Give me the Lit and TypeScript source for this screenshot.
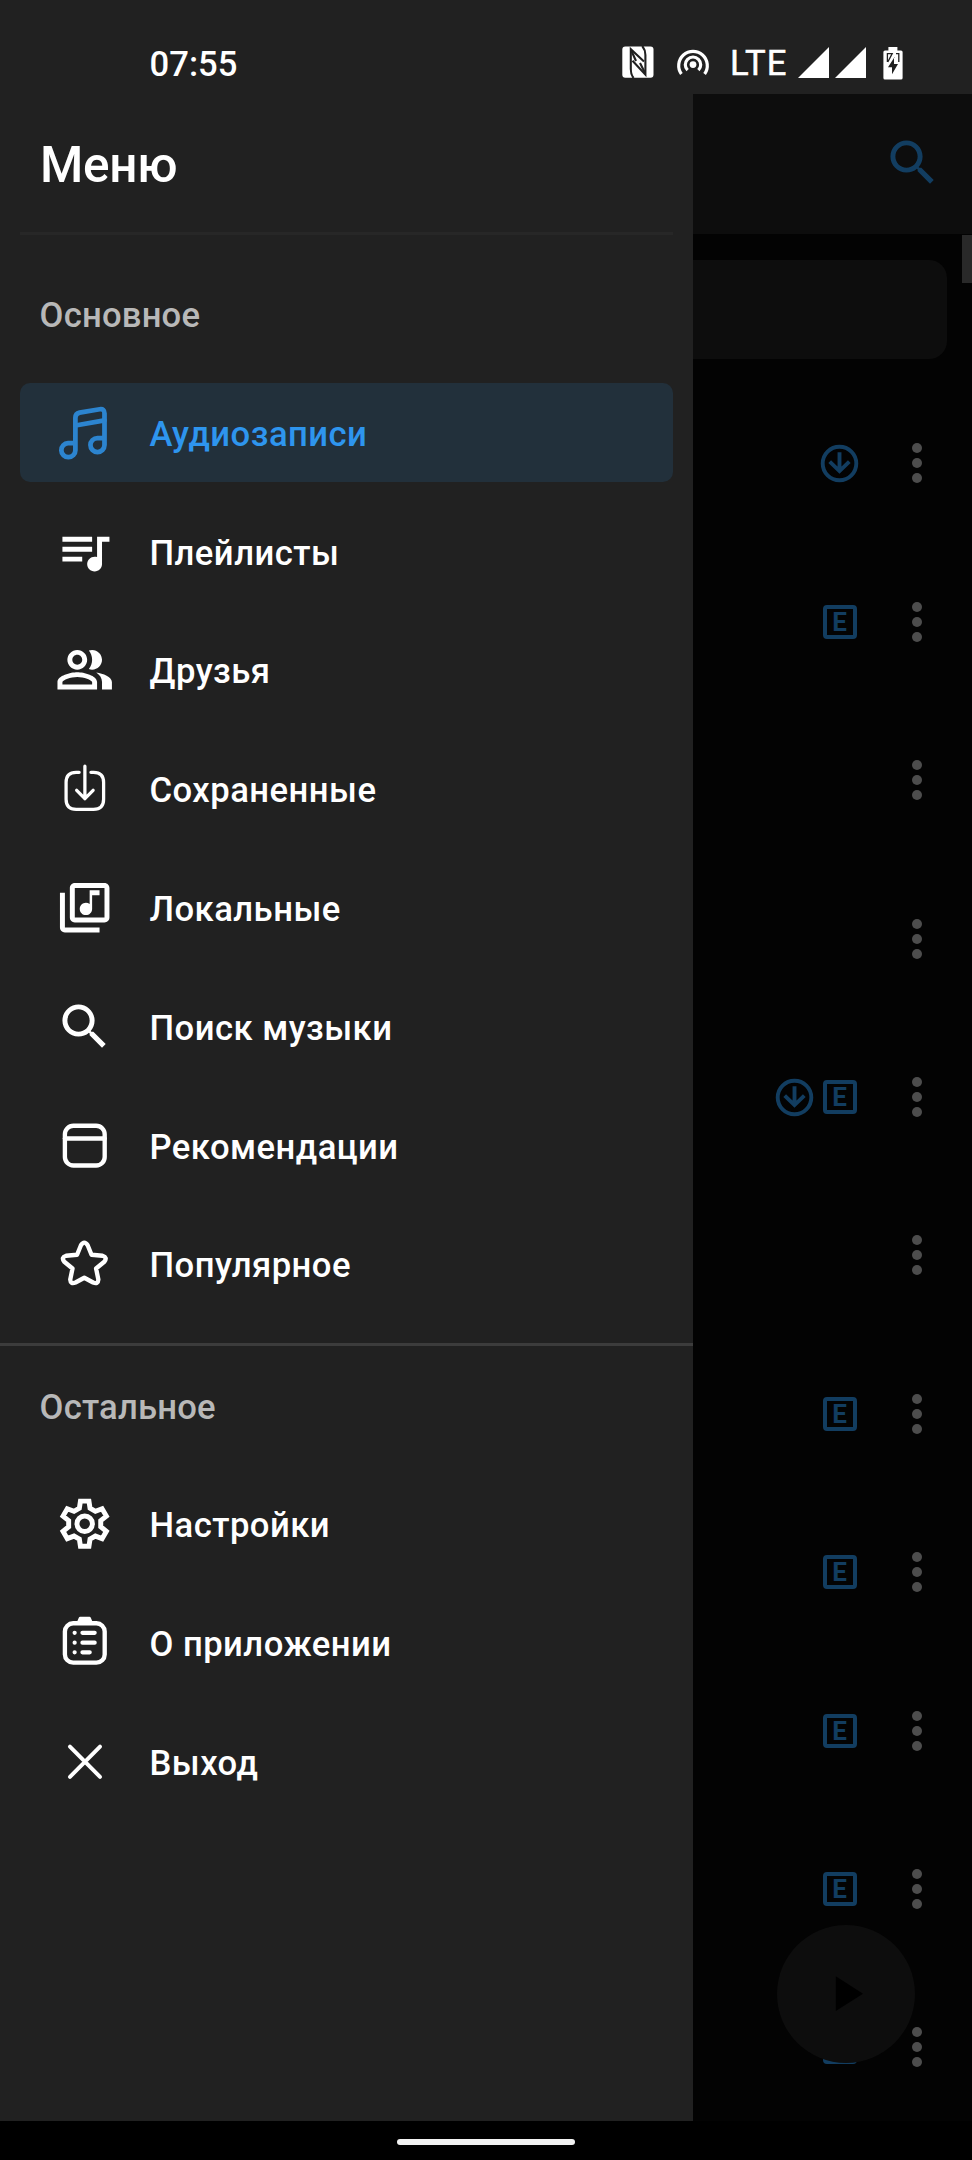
import { LitElement, html, svg, css, TemplateResult, SVGTemplateResult } from "lit";
import { customElement, property } from "lit/decorators.js";
import { classMap } from "lit/directives/class-map.js";

type IconName =
  | "music" | "queue" | "friends" | "saved" | "local" | "search"
  | "window" | "star" | "gear" | "clipboard" | "close" | "play";

// Icons on the 24-unit grid are filled; those on the 60-unit grid are stroked.
const FILLED: Partial<Record<IconName, string>> = {
  queue: "M15 6H3v2h12V6zm0 4H3v2h12v-2zM3 16h8v-2H3v2zM17 6v8.18c-.31-.11-.65-.18-1-.18-1.66 0-3 1.34-3 3s1.34 3 3 3 3-1.34 3-3V8h3V6h-5z",
  friends: "M16.67 13.13C18.04 14.06 19 15.32 19 17v3h4v-3c0-2.18-3.57-3.47-6.33-3.87zM15 12c2.21 0 4-1.79 4-4s-1.79-4-4-4c-.47 0-.91.1-1.33.24C14.5 5.27 15 6.58 15 8s-.5 2.73-1.33 3.76c.42.14.86.24 1.33.24zM9 12c2.21 0 4-1.79 4-4s-1.79-4-4-4-4 1.79-4 4 1.79 4 4 4zm0-6c1.1 0 2 .9 2 2s-.9 2-2 2-2-.9-2-2 .9-2 2-2zm0 7c-2.67 0-8 1.34-8 4v3h16v-3c0-2.66-5.33-4-8-4zm6 5H3v-.99C3.2 16.29 6.3 15 9 15s5.8 1.29 6 2v1z",
  local: "M20 2H8c-1.1 0-2 .9-2 2v12c0 1.1.9 2 2 2h12c1.1 0 2-.9 2-2V4c0-1.1-.9-2-2-2zm0 14H8V4h12v12zm-7.5-1c1.38 0 2.5-1.12 2.5-2.5V7h3V5h-4v5.51c-.42-.32-.93-.51-1.5-.51-1.38 0-2.5 1.12-2.5 2.5s1.12 2.5 2.5 2.5zM4 6H2v14c0 1.1.9 2 2 2h14v-2H4V6z",
  search: "M15.5 14h-.79l-.28-.27C15.41 12.59 16 11.11 16 9.5 16 5.91 13.09 3 9.5 3S3 5.91 3 9.5 5.91 16 9.5 16c1.61 0 3.09-.59 4.23-1.57l.27.28v.79l5 4.99L20.49 19l-4.99-5zm-6 0C7.01 14 5 11.99 5 9.5S7.01 5 9.5 5 14 7.01 14 9.5 11.99 14 9.5 14z",
  play: "M8 5v14l11-7z",
};

const STROKED: Partial<Record<IconName, SVGTemplateResult>> = {
  music: svg`<g stroke-width="4.8">
    <path d="M20.6 40.6h-7.4a7.1 7.1 0 1 0 7.4 7.1V15q0-4.4 4.2-5.3L45.2 6.300q4.800-.700 4.800 4.200V42.500a7.100 7.100 0 1 1-7.100-7.100h7.100"/>
    <path d="M20.6 22.7L50 17.5"/></g>`,
  saved: svg`<g stroke-width="3.3">
    <path d="M24.4 13.4h-3q-10.2 0-10.2 10.2v17q0 10.2 10.2 10.2h17.5q10.2 0 10.2-10.2v-17q0-10.2-10.2-10.2h-2.6"/>
    <path d="M30.2 7.2v33M21.9 31.6l8.3 8.4 8.3-8.4"/></g>`,
  window: svg`<g stroke-width="4.4"><rect x="10" y="9.9" width="40.2" height="40.1" rx="8.6"/><path d="M10 22.7h40.2"/></g>`,
  star: svg`<path stroke-width="4.4" d="M26.2 11.4Q29.6 6 33 11.4L36.9 21L48 22Q53.4 23.8 49.8 28L41.5 34.8L43.8 46Q43.5 51.2 38.5 49L29.6 44.2L20.7 49Q15.7 51.2 15.4 46L17.7 34.8L9.4 28Q5.8 23.8 11.2 22L22.3 21Z"/>`,
  gear: svg`<g transform="translate(30 30)" stroke-width="5" stroke-linejoin="miter">
    <path d="M-4.3-22.8H4.3L5.4-15.6 10.8-12.5 17.6-15.1 21.9-7.7 16.2-3.1V3.1L21.9 7.7 17.6 15.1 10.8 12.5 5.4 15.6 4.3 22.8H-4.3L-5.4 15.6-10.8 12.5-17.6 15.1-21.9 7.7-16.2 3.1V-3.1L-21.9-7.7-17.6-15.1-10.8-12.5-5.4-15.6Z"/>
    <circle r="7.8"/></g>`,
  clipboard: svg`<g><rect x="10" y="10.4" width="40.2" height="39.8" rx="8.4" stroke-width="4.4"/>
    <path d="M24 8.6L25.4 5.4H34.8L36.2 8.6Z" stroke-width="3" fill="currentColor"/>
    <path stroke-width="4.2" d="M19.8 20h.1M19.8 30h.1M19.8 39.7h.1M27.7 20h12.4M27.7 30h12.4M27.7 39.7h7.4"/></g>`,
  close: svg`<path stroke-width="4" d="M15.1 14.7L45.5 45.3M45.5 14.7L15.1 45.3"/>`,
};

@customElement("line-icon")
export class LineIcon extends LitElement {
  @property() name: IconName = "search";

  static styles = css`
    :host { display: block; width: 59.4px; height: 59.4px; flex: none; }
    .glyph { display: block; width: 100%; height: 100%; }
  `;

  render() {
    const path = FILLED[this.name];
    return path
      ? html`<svg class="glyph" viewBox="0 0 24 24" fill="currentColor"><path d=${path}></path></svg>`
      : html`<svg class="glyph" viewBox="0 0 60 60" fill="none" stroke="currentColor"
          stroke-linecap="round" stroke-linejoin="round">${STROKED[this.name]}</svg>`;
  }
}

@customElement("status-bar")
export class StatusBar extends LitElement {
  static styles = css`
    :host {
      display: flex; align-items: flex-start; height: 93.5px; box-sizing: border-box;
      padding: 44px 69px 0 149.5px; background: #212121; color: #fff;
      font: 500 34.65px/40px Roboto, sans-serif;
    }
    .time { flex: 1; }
    .nfc, .cast, .signal, .battery { display: block; flex: none; }
    .nfc { width: 32px; height: 32px; margin: 2px 22px 0 0; }
    .cast { width: 34px; height: 32px; margin: 2px 20px 0 0; }
    .lte { width: 68px; font-weight: 400; letter-spacing: 1px; margin-top: -1px; -webkit-text-stroke: .5px #fff; }
    .signal { width: 68px; height: 31px; margin: 3px 17px 0 0; }
    .battery { width: 20px; height: 33px; margin-top: 3px; }
  `;

  render() {
    return html`
      <span class="time">07:55</span>
      <svg class="nfc" viewBox="0 0 32 32" fill="none">
        <rect x=".3" y=".4" width="31.2" height="31.4" rx="3" fill="#fff"/>
        <g stroke="#212121" stroke-width="2.1">
          <path d="M11.6 32C9 29 8.8 26.5 8.8 23V3.2L22 15.4"/>
          <path d="M20.2 0C22.8 3 23.4 5.5 23.4 9V28.6L10.500 14.800"/>
          <path d="M9.500 5L14 15M22.800 26.500L18 17"/>
        </g>
      </svg>
      <svg class="cast" viewBox="0 0 34 32" fill="none" stroke="#fff" stroke-width="3.2">
        <path d="M5.4 28A14.3 14.3 0 1 1 28.6 28"/>
        <path d="M11.6 24.2A7.7 7.7 0 1 1 22.4 24.2"/>
        <circle cx="17" cy="18.6" r="3.4" fill="#fff" stroke="none"/>
      </svg>
      <span class="lte">LTE</span>
      <svg class="signal" viewBox="0 0 68 31" fill="#fff"><path d="M0 31L31 0V31ZM37 31L68 0V31Z"/></svg>
      <svg class="battery" viewBox="0 0 20 33">
        <path fill="#fff" d="M5.4 0h9v3.4H18q1.6 0 1.6 1.6V31q0 1.6-1.6 1.6H2Q.4 32.6.4 31V5q0-1.6 1.6-1.6h3.4z"/>
        <path fill="#212121" d="M11.6 10L5 20.2h4v7L15 17h-4V10z"/>
        <path fill="none" stroke="#212121" stroke-width="1.3" d="M4.4 15V6.6H9.2L4.8 15M13 6.6h2.8V15"/>
      </svg>
    `;
  }
}

interface Entry { icon: IconName; label: string; active?: boolean }

const MAIN: Entry[] = [
  { icon: "music", label: "Аудиозаписи", active: true },
  { icon: "queue", label: "Плейлисты" },
  { icon: "friends", label: "Друзья" },
  { icon: "saved", label: "Сохраненные" },
  { icon: "local", label: "Локальные" },
  { icon: "search", label: "Поиск музыки" },
  { icon: "window", label: "Рекомендации" },
  { icon: "star", label: "Популярное" },
];

const OTHER: Entry[] = [
  { icon: "gear", label: "Настройки" },
  { icon: "clipboard", label: "О приложении" },
  { icon: "close", label: "Выход" },
];

@customElement("nav-drawer")
export class NavDrawer extends LitElement {
  static styles = css`
    :host {
      display: block; width: 693px; flex: none; background: #212121; color: #fff;
      font: 500 34.65px/40px Roboto, sans-serif;
    }
    .title {
      height: 141px; box-sizing: border-box; margin: 0 20px; padding: 41px 20px 0;
      border-bottom: 3px solid #272727; font: 500 49.5px/60px Roboto, sans-serif; letter-spacing: -.3px;
    }
    .section { padding-left: 39.6px; color: #b8b8b8; letter-spacing: .2px; }
    .section.main { margin: 60.5px 0 48px; }
    .section.other { margin: 40.5px 0 48px; }
    .list { display: grid; grid-auto-rows: 99px; row-gap: 19.8px; padding: 0 20px; }
    .item { display: flex; align-items: center; gap: 35.6px; padding-left: 34.5px; border-radius: 10px; }
    .label { padding-top: 2.8px; letter-spacing: .47px; }
    .item.active { background: #22303b; color: #2e95ee; }
    .item.active .icon { color: #2c84cf; }
    .rule { height: 3px; margin-top: 29.5px; background: #3c3c3c; }
  `;

  private items(entries: Entry[]): TemplateResult {
    return html`<div class="list">${entries.map((e) => html`
      <div class=${classMap({ item: true, active: !!e.active })}>
        <line-icon class="icon" name=${e.icon}></line-icon>
        <span class="label">${e.label}</span>
      </div>`)}</div>`;
  }

  render() {
    return html`
      <div class="title">Меню</div>
      <div class="section main">Основное</div>
      ${this.items(MAIN)}
      <div class="rule"></div>
      <div class="section other">Остальное</div>
      ${this.items(OTHER)}
    `;
  }
}

// One entry per track: "d" is downloaded, "e" is explicit.
const TRACKS = ["d", "e", "", "", "de", "", "e", "e", "e", "e", "e"];

@customElement("track-list")
export class TrackList extends LitElement {
  static styles = css`
    :host {
      display: block; flex: 1; min-width: 0; position: relative; overflow: hidden;
      background: #030303; color: #123d60; font-family: Roboto, sans-serif;
    }
    .bar {
      display: flex; justify-content: flex-end; height: 140.5px; box-sizing: border-box;
      padding: 39px 30px 0 0; background: #0d0d0d;
    }
    .field { height: 99px; margin: 26px 25px 25.3px 0; border-radius: 0 18px 18px 0; background: #0d0d0d; }
    .thumb { position: absolute; right: 0; top: 141.5px; width: 10px; height: 48px; background: #292929; }
    .row { display: flex; align-items: center; justify-content: flex-end; height: 158.4px; padding-right: 50px; }
    .download { display: block; width: 45px; height: 45px; }
    .slot { display: flex; width: 45px; height: 45px; align-items: center; justify-content: center; }
    .explicit {
      display: flex; align-items: center; justify-content: center;
      width: 34px; height: 34px; box-sizing: border-box; border: 4px solid; border-radius: 4px;
      font-size: 26px; font-weight: 700; line-height: 26px;
    }
    .dots { display: block; width: 10px; height: 40px; margin-left: 50px; }
    .fab {
      position: absolute; left: 83.5px; top: 1831.2px; width: 138.6px; height: 138.6px;
      display: grid; place-items: center; border-radius: 50%; background: #0d0d0d; color: #000;
    }
  `;

  render() {
    return html`
      <div class="bar"><line-icon name="search"></line-icon></div>
      <div class="field"></div>
      ${TRACKS.map((t) => html`<div class="row">
        ${t.includes("d") ? html`<svg class="download" viewBox="0 0 45 45" fill="none" stroke="currentColor" stroke-width="3.9">
          <circle cx="22.5" cy="22.5" r="16.8"/><path d="M22.5 11.3v19M12.7 20.7l9.8 9.4 9.8-9.4"/></svg>` : ""}
        ${t.includes("e") ? html`<span class="slot"><span class="explicit">E</span></span>` : ""}
        <svg class="dots" viewBox="0 0 10 40" fill="#4d4d4d">
          <circle cx="5" cy="5" r="5"/><circle cx="5" cy="20" r="5"/><circle cx="5" cy="35" r="5"/></svg>
      </div>`)}
      <div class="thumb"></div>
      <div class="fab"><line-icon name="play"></line-icon></div>
    `;
  }
}

@customElement("app-root")
export class AppRoot extends LitElement {
  static styles = css`
    :host { display: flex; flex-direction: column; width: 972px; height: 2160px; overflow: hidden; background: #000; }
    .body { display: flex; flex: 1; min-height: 0; }
    .gestures { display: flex; justify-content: center; height: 39.5px; box-sizing: border-box; padding-top: 18.5px; background: #000; }
    .handle { width: 178px; height: 6px; border-radius: 3px; background: #f2f2f2; }
  `;

  render() {
    return html`
      <status-bar></status-bar>
      <div class="body"><nav-drawer></nav-drawer><track-list></track-list></div>
      <div class="gestures"><div class="handle"></div></div>
    `;
  }
}
